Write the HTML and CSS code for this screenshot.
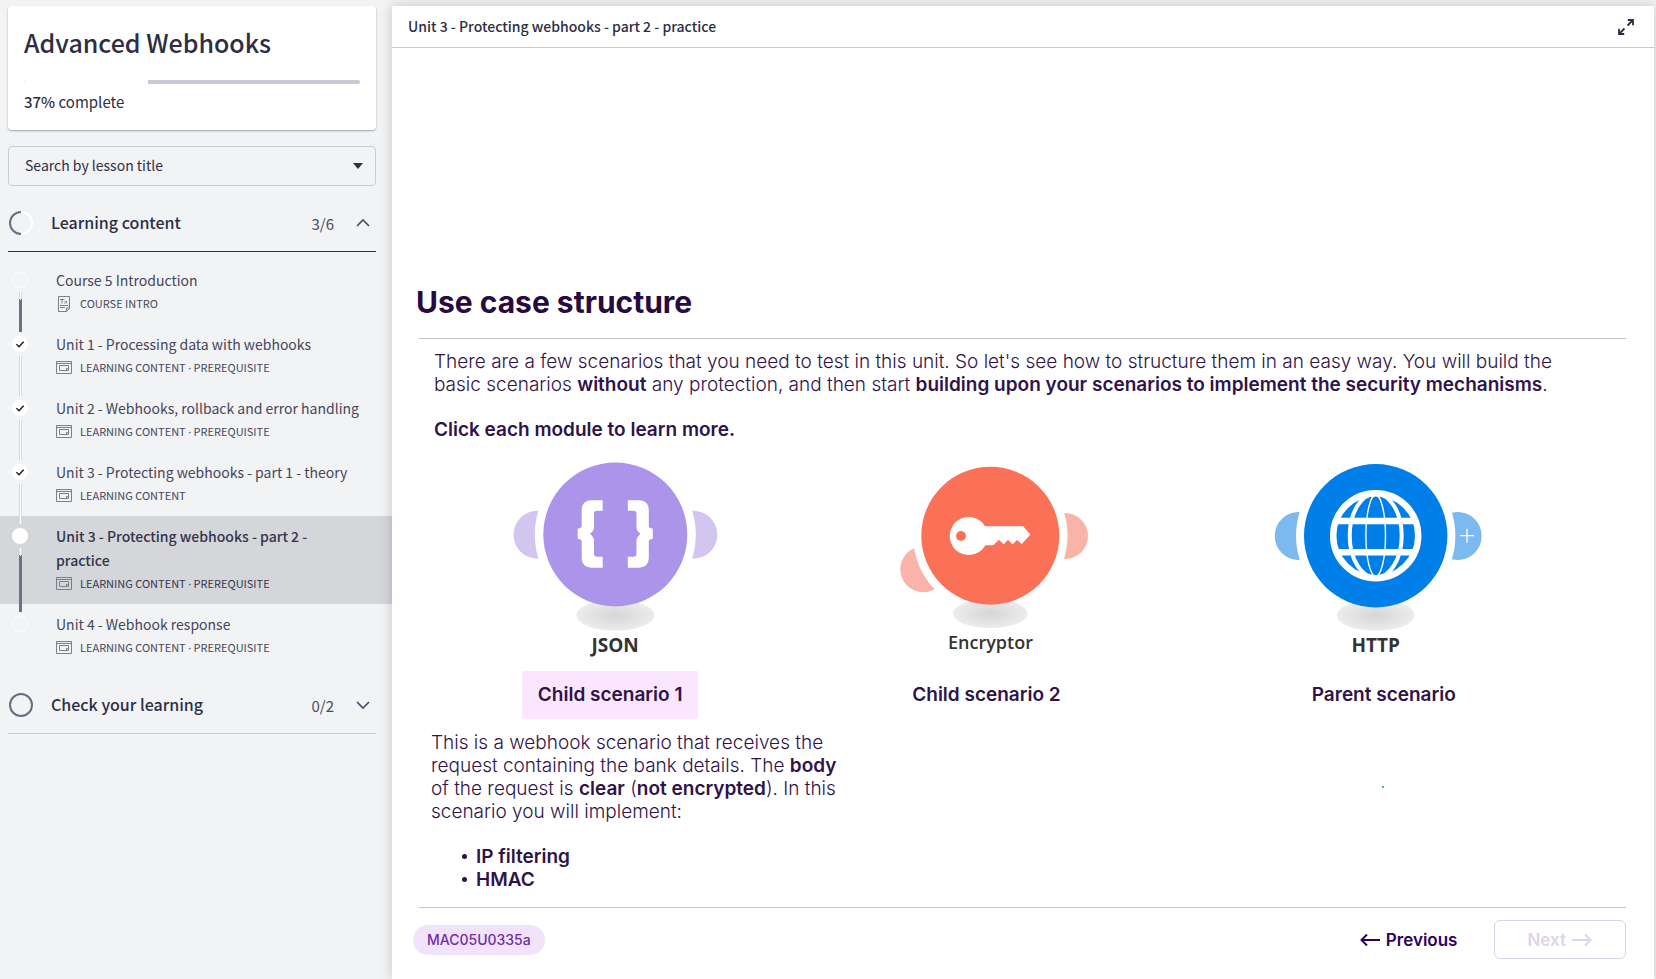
FILE: index.html
```html
<!DOCTYPE html>
<html lang="en">
<head>
<meta charset="utf-8">
<title>Advanced Webhooks</title>
<link rel="stylesheet" href="styles.css">
</head>
<body>
<svg class="defs" width="0" height="0" aria-hidden="true">
  <defs>
    <radialGradient id="shade"><stop offset="0" stop-color="#d6d6d6"/><stop offset="1" stop-color="#ececec"/></radialGradient>
    <symbol id="i-check" viewBox="0 0 16 16"><path d="M4.500 8.300 7 10.700 11.700 5.800" fill="none" stroke="#1d1f2b" stroke-width="1.500"/></symbol>
    <symbol id="i-window" viewBox="0 0 16 13"><g fill="none" stroke="#7c7d8e"><path d="M.5.500h15v12H.5zM.5 2.500h15"/><path d="M3.500 4.500h9v5h-9zM12.500 7.500h-2v2"/></g></symbol>
    <symbol id="i-doc" viewBox="0 0 16 16"><g fill="none" stroke="#7c7d8e"><path d="M2.500.500h11v12l-3 3h-8zM13.500 12h-3v3.500M4 9.500h8M4 11.500h5M4 3.500h4.500M6 3.500v4M8.500 5l2.500 2.500M11 5 8.500 7.500"/></g></symbol>
    <symbol id="i-up" viewBox="0 0 14 8"><path d="M1 7 7 1l6 6" fill="none" stroke="currentColor" stroke-width="1.700"/></symbol>
    <symbol id="i-down" viewBox="0 0 14 8"><path d="m1 1 6 6 6-6" fill="none" stroke="currentColor" stroke-width="1.700"/></symbol>
  </defs>
</svg>
<div class="app">
  <aside class="sidebar">
    <section class="course">
      <h1 class="course-title">Advanced Webhooks</h1>
      <div class="bar" role="progressbar" aria-label="Course progress" aria-valuenow="37" aria-valuemin="0" aria-valuemax="100"><span class="bar-done" style="width:37%"></span></div>
      <p class="complete"><strong>37%</strong> complete</p>
    </section>

    <div class="search">
      <select class="search-select" aria-label="Search by lesson title"><option>Search by lesson title</option></select>
      <svg class="caret" viewBox="0 0 10 6" aria-hidden="true"><path d="M0 0h10L5 6z" fill="#2d2e45"/></svg>
    </div>

    <button class="group open" type="button" aria-expanded="true">
      <svg class="ring" viewBox="0 0 24 24" aria-hidden="true"><circle cx="12" cy="12" r="11" fill="none" stroke="#fff" stroke-width="2"/><path d="M12 1a11 11 0 0 0 0 22" fill="none" stroke="#6b6c80" stroke-width="2"/></svg>
      <span class="group-name">Learning content</span>
      <span class="count">3/6</span>
      <svg class="chev" aria-hidden="true"><use href="#i-up"/></svg>
    </button>

    <ul class="lessons">
      <li class="lesson">
        <div class="rail"><span class="dot"></span><span class="track current"></span></div>
        <a class="lesson-link" href="#"><span class="lesson-title">Course 5 Introduction</span><span class="meta"><svg class="kind" aria-hidden="true"><use href="#i-doc"/></svg>COURSE INTRO</span></a>
      </li>
      <li class="lesson">
        <div class="rail"><span class="dot full"><svg class="tick" aria-hidden="true"><use href="#i-check"/></svg></span><span class="track"></span></div>
        <a class="lesson-link" href="#"><span class="lesson-title">Unit 1 - Processing data with webhooks</span><span class="meta"><svg class="kind short" aria-hidden="true"><use href="#i-window"/></svg><span>LEARNING CONTENT <span class="sep">·</span> PREREQUISITE</span></span></a>
      </li>
      <li class="lesson">
        <div class="rail"><span class="dot full"><svg class="tick" aria-hidden="true"><use href="#i-check"/></svg></span><span class="track"></span></div>
        <a class="lesson-link" href="#"><span class="lesson-title">Unit 2 - Webhooks, rollback and error handling</span><span class="meta"><svg class="kind short" aria-hidden="true"><use href="#i-window"/></svg><span>LEARNING CONTENT <span class="sep">·</span> PREREQUISITE</span></span></a>
      </li>
      <li class="lesson">
        <div class="rail"><span class="dot full"><svg class="tick" aria-hidden="true"><use href="#i-check"/></svg></span><span class="track"></span></div>
        <a class="lesson-link" href="#"><span class="lesson-title">Unit 3 - Protecting webhooks - part 1 - theory</span><span class="meta"><svg class="kind short" aria-hidden="true"><use href="#i-window"/></svg>LEARNING CONTENT</span></a>
      </li>
      <li class="lesson active">
        <div class="rail"><span class="dot full"></span><span class="track current"></span></div>
        <a class="lesson-link" href="#" aria-current="page"><span class="lesson-title">Unit 3 - Protecting webhooks - part 2 - practice</span><span class="meta"><svg class="kind short" aria-hidden="true"><use href="#i-window"/></svg><span>LEARNING CONTENT <span class="sep">·</span> PREREQUISITE</span></span></a>
      </li>
      <li class="lesson">
        <div class="rail"><span class="dot"></span></div>
        <a class="lesson-link" href="#"><span class="lesson-title">Unit 4 - Webhook response</span><span class="meta"><svg class="kind short" aria-hidden="true"><use href="#i-window"/></svg><span>LEARNING CONTENT <span class="sep">·</span> PREREQUISITE</span></span></a>
      </li>
    </ul>

    <button class="group" type="button" aria-expanded="false">
      <svg class="ring" viewBox="0 0 24 24" aria-hidden="true"><circle cx="12" cy="12" r="11" fill="none" stroke="#6b6c80" stroke-width="2"/></svg>
      <span class="group-name">Check your learning</span>
      <span class="count">0/2</span>
      <svg class="chev" aria-hidden="true"><use href="#i-down"/></svg>
    </button>
  </aside>

  <main class="panel">
    <header class="panel-head">
      <h2 class="panel-title">Unit 3 - Protecting webhooks - part 2 - practice</h2>
      <button class="expand" type="button" aria-label="Full screen">
        <svg class="expand-icon" viewBox="0 0 16 16" aria-hidden="true"><g fill="none" stroke="#2d2e45" stroke-width="1.800"><path d="M9.500 6.500 15 1M9.800 1H15v5.200M6.500 9.500 1 15M1 9.800V15h5.200"/></g></svg>
      </button>
    </header>

    <article class="slide">
      <h3 class="slide-title">Use case structure</h3>
      <section class="body">
        <div class="intro">
          <p class="text">There are a few scenarios that you need to test in this unit. So let's see how to structure them in an easy way. You will build the basic scenarios <b>without</b> any protection, and then start <b>building upon your scenarios to implement the security mechanisms</b>.</p>
          <p class="text"><b>Click each module to learn more.</b></p>
        </div>

        <div class="modules">
          <button class="module" type="button">
            <svg class="art" viewBox="0 0 216 175" aria-hidden="true">
              <g fill="#d2c5f0"><circle cx="30.500" cy="76.700" r="24"/><circle cx="186.300" cy="76.700" r="24"/></g>
              <circle cx="108.300" cy="76.500" r="80.500" fill="#fff"/>
              <ellipse cx="108.300" cy="157.300" rx="39" ry="15.500" fill="url(#shade)"/>
              <circle cx="108.300" cy="76.500" r="72" fill="#ab94ea"/>
              <g fill="#fff">
                <path id="brace" d="M95.700 42.300V52.700H90Q87 52.700 87 56V69.500Q87 72.500 83 76Q87 79 87 82.500V95.500Q87 98.700 90 98.700H95.700V109.700H84Q74.700 108.700 74.700 100V83Q74.700 81.500 70.700 80.700V70.700Q74.700 70 74.700 68.300V52Q74.700 43 84 42.300Z"/>
                <use href="#brace" transform="matrix(-1 0 0 1 216.500 0)"/>
              </g>
            </svg>
            <span class="module-name">JSON</span>
          </button>
          <button class="module" type="button">
            <svg class="art low" viewBox="0 0 216 172" aria-hidden="true">
              <g fill="#f9b3a8"><circle cx="41.300" cy="111.300" r="23"/><circle cx="183" cy="78" r="23"/></g>
              <circle cx="108.300" cy="77.700" r="77.300" fill="#fff"/>
              <ellipse cx="108.300" cy="155.500" rx="37.500" ry="14.500" fill="url(#shade)"/>
              <circle cx="108.300" cy="77.700" r="69" fill="#fb7158"/>
              <path fill="#fff" d="M98 68.300h43.300l7 8.400L139.700 86 135 82l-4.300 4.300L126 82l-4.300 4.300-4.700-4.600-5.700 5.600H98z"/>
              <circle cx="86.700" cy="78" r="19" fill="#fff"/>
              <circle cx="79" cy="78" r="5" fill="#fb7158"/>
            </svg>
            <span class="module-name small">Encryptor</span>
          </button>
          <button class="module" type="button">
            <svg class="art" viewBox="0 0 216 175" aria-hidden="true">
              <g fill="#7cb9ef"><circle cx="30.700" cy="78" r="24"/><circle cx="189.700" cy="78" r="24"/></g>
              <circle cx="107.700" cy="77.700" r="79.700" fill="#fff"/>
              <path d="M192 77.700h14M199 70.700v14" stroke="#fff" stroke-width="1.300"/>
              <ellipse cx="107.700" cy="157.300" rx="39" ry="15.500" fill="url(#shade)"/>
              <circle cx="107.700" cy="77.700" r="71.700" fill="#007fe8"/>
              <g fill="none" stroke="#fff">
                <circle cx="107.700" cy="77.700" r="42.500" stroke-width="6.500"/>
                <path d="M67 63h81.400M67 94.300h81.400" stroke-width="6.500"/>
                <ellipse cx="107.700" cy="77.700" rx="26" ry="42" stroke-width="4"/>
                <ellipse cx="107.700" cy="77.700" rx="9.800" ry="40.500" stroke-width="1.400"/>
              </g>
            </svg>
            <span class="module-name">HTTP</span>
          </button>
        </div>

        <div class="tabs">
          <button class="tab selected" type="button">Child scenario 1</button>
          <button class="tab" type="button">Child scenario 2</button>
          <button class="tab" type="button">Parent scenario</button>
        </div>

        <div class="details">
          <div class="detail">
            <p class="text">This is a webhook scenario that receives the request containing the bank details. The <b>body</b> of the request is <b>clear</b> (<b>not encrypted</b>). In this scenario you will implement:</p>
            <ul class="points"><li>IP filtering</li><li>HMAC</li></ul>
          </div>
          <span class="speck"></span>
        </div>
      </section>

      <footer class="foot">
        <span class="chip">MAC05U0335a</span>
        <nav class="nav">
          <button class="prev" type="button"><svg class="arrow" viewBox="0 0 20 14" aria-hidden="true"><path d="M20 7H2M7 1.500 1.500 7 7 12.500" fill="none" stroke="currentColor" stroke-width="2"/></svg>Previous</button>
          <button class="next" type="button" disabled>Next<svg class="arrow" viewBox="0 0 20 14" aria-hidden="true"><path d="M0 7h18M13 1.500 18.500 7 13 12.500" fill="none" stroke="currentColor" stroke-width="2"/></svg></button>
        </nav>
      </footer>
    </article>
  </main>
</div>
</body>
</html>
```

FILE: styles.css
```css
* { box-sizing: border-box; }
body {
  margin: 0;
  background: #f1f3f5;
  color: #2d2e45;
  font-family: "Noto Sans CJK SC", "Noto Sans", sans-serif;
  font-size: 14px;
}
h1, h2, h3, p, ul { margin: 0; padding: 0; }
ul { list-style: none; }
button { border: 0; padding: 0; background: none; color: inherit; font: inherit; cursor: pointer; }
a { color: inherit; text-decoration: none; }
.defs { position: absolute; }

.app { display: flex; min-height: 100vh; padding: 6px 2px 0 0; }

/* Sidebar */
.sidebar { flex: 0 0 392px; }
.course {
  margin: 0 16px 16px 8px;
  padding: 16px;
  height: 124px;
  border-radius: 4px;
  background: #fff;
  box-shadow: 0 1px 2px rgba(45, 46, 69, .4);
}
.course-title { font-size: 25px; font-weight: 500; line-height: 40px; }
.bar { height: 4px; margin-top: 18px; border-radius: 2px; background: #c9cad6; overflow: hidden; }
.bar-done { display: block; height: 4px; background: #fff; }
.complete { margin-top: 6px; font-size: 15px; line-height: 24px; }
.complete strong { font-weight: 500; }

.search { position: relative; margin: 0 16px 9px 8px; }
.search-select {
  display: block;
  width: 100%;
  height: 40px;
  padding: 0 16px 2px;
  border: 1px solid #c9cad6;
  border-radius: 4px;
  background: transparent;
  color: inherit;
  font: inherit;
  appearance: none;
}
.caret { position: absolute; right: 13px; top: 17px; width: 10px; height: 6px; pointer-events: none; }

.group {
  display: flex;
  align-items: center;
  width: calc(100% - 24px);
  height: 57px;
  margin: 9px 16px 8px 8px;
  padding-right: 6px;
  border-bottom: 1px solid #c9cad6;
  text-align: left;
}
.group.open { border-color: #2d2e45; }
.ring { width: 24px; height: 24px; margin: 0 18px 0 1px; }
.group-name { flex: 1; padding-bottom: 2px; font-size: 16px; font-weight: 500; line-height: 24px; }
.count { margin-right: 22px; color: #4b4c60; font-size: 15px; }
.chev { width: 14px; height: 8px; color: #4b4c60; }

.lesson { display: flex; color: #45465c; }
.lesson.active { background: #d5d6da; color: #33344b; }
.rail { display: flex; flex-direction: column; align-items: center; gap: 4px; width: 24px; margin-left: 8px; padding-top: 12px; }
.dot { width: 16px; height: 16px; border: 1px solid #fff; border-radius: 50%; }
.dot.full { display: flex; border: 0; background: #fff; }
.tick { width: 16px; height: 16px; }
.track { flex: 1; width: 3px; margin-bottom: -8px; border: solid #d9dade; border-width: 0 1px; background: #fff; }
.track.current { background: linear-gradient(#fff 8px, #6f7086 8px); border-image: linear-gradient(#d9dade 8px, #6f7086 8px) 1; }
.lesson-link { flex: 1; padding: 8px 20px 9px 24px; }
.lesson-title { display: block; line-height: 24px; }
.active .lesson-link { padding-right: 40px; }
.active .lesson-title { font-weight: 500; }
.meta { display: flex; align-items: center; gap: 8px; height: 23px; font-size: 11px; line-height: 23px; }
.sep { font-family: "Noto Sans", sans-serif; }
.kind { width: 16px; height: 16px; }
.kind.short { height: 13px; }

/* Lesson panel */
.panel { flex: 1; display: flex; flex-direction: column; min-width: 0; background: #fff; box-shadow: 0 0 12px rgba(0, 0, 0, .2); }
.panel-head { display: flex; align-items: center; justify-content: space-between; height: 42px; padding: 0 20px 0 16px; border-bottom: 1px solid #c9c8da; }
.panel-title { padding-bottom: 1px; font-size: 14px; font-weight: 500; line-height: 24px; }
.expand { display: flex; }
.expand-icon { width: 16px; height: 16px; }

.slide { padding: 228px 28px 20px 24px; color: #2f1349; font-family: Inter, sans-serif; font-size: 19px; }
.slide-title { color: #270b40; font-size: 30px; font-weight: 700; line-height: 52px; }
.body { margin-left: 3px; padding: 11px 0 16px; margin-top: 10px; border: solid #c8c0c4; border-width: 1px 0; }
.text { font-weight: 300; line-height: 23px; }
.text b { font-weight: 600; }
.intro { display: grid; gap: 22px; padding: 0 70px 0 15px; }
.modules { display: grid; grid-template-columns: 392fr 358fr 412fr 44fr; margin-top: 17px; }
.module { display: flex; flex-direction: column; align-items: center; }
.art { width: 216px; height: 175px; }
.art.low { height: 172px; }
.module-name { color: #333; font-family: "Open Sans", sans-serif; font-size: 19px; font-weight: 700; line-height: 24px; }
.module-name.small { font-size: 18px; font-weight: 600; }
.tabs { display: grid; grid-template-columns: 382fr 370fr 424fr 30fr; justify-items: center; margin-top: 14px; }
.tab { height: 48px; padding: 0 16px 2px; font-weight: 600; }
.tab.selected { background: #fae6ff; }
.details { display: flex; padding: 12px 0 0 12px; }
.detail { width: 420px; }
.points { margin: 22px 0 0 31px; font-weight: 600; line-height: 23px; }
.points li { display: flex; align-items: center; gap: 9px; }
.points li::before { content: ""; width: 5px; height: 5px; border-radius: 50%; background: #2f1349; }
.speck { width: 2px; height: 2px; margin: 55px 0 0 531px; background: #45b5a5; }

.foot { display: flex; align-items: center; justify-content: space-between; margin-top: 12px; font-size: 17px; }
.chip { margin-left: -3px; padding: 0 14px; border-radius: 15px; background: #f0e3fb; color: #6f2da8; font-size: 14px; font-weight: 500; line-height: 30px; }
.nav { display: flex; align-items: center; gap: 37px; font-weight: 600; }
.arrow { width: 20px; height: 14px; }
.prev, .next { display: flex; align-items: center; gap: 6px; }
.prev { color: #30005f; }
.next { height: 39px; padding: 0 33px 0 32px; border: 1px solid #ddd3e8; border-radius: 6px; color: #dfd5e9; cursor: default; }
```
